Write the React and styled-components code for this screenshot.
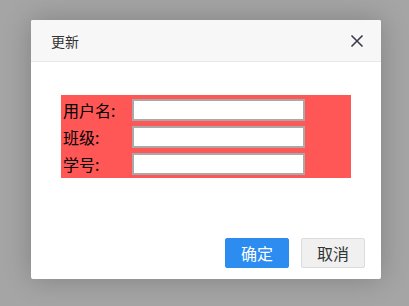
import { Fragment } from 'react';
import styled, { createGlobalStyle } from 'styled-components';

const Global = createGlobalStyle`
  body {
    margin: 0;
    font-family: "Noto Sans CJK SC", "Noto Sans", sans-serif;
  }
`;

const Backdrop = styled.div`
  width: 409px;
  height: 306px;
  box-sizing: border-box;
  padding: 20px 0 0 31px;
  background: #a5a5a5;
  overflow: hidden;
`;

const Dialog = styled.div`
  width: 350px;
  height: 259px;
  display: flex;
  flex-direction: column;
  background: #fff;
  border-radius: 2px;
  box-shadow: 0 0 28px rgba(0, 0, 0, 0.22);
  overflow: hidden;
`;

const Header = styled.div`
  height: 42px;
  box-sizing: border-box;
  display: flex;
  align-items: center;
  justify-content: space-between;
  padding: 0 17px 0 20px;
  background: #f7f7f7;
  border-bottom: 1px solid #e9e9e9;
`;

const Title = styled.span`
  font-size: 14px;
  color: #333;
`;

const Close = styled.button`
  width: 14px;
  height: 14px;
  padding: 0;
  border: 0;
  background: none;
  display: flex;
  cursor: pointer;
`;

const Body = styled.div`
  flex: 1;
  padding: 33px 30px 0;
`;

const Form = styled.div`
  width: 290px;
  height: 83px;
  box-sizing: border-box;
  padding: 4px 2px 0;
  background: #ff5656;
  display: grid;
  grid-template-columns: 69px 173px;
  grid-auto-rows: 22px;
  row-gap: 5px;
  align-items: center;
`;

const Label = styled.label`
  font-size: 16px;
  color: #000;
  line-height: 22px;
`;

const Input = styled.input`
  width: 173px;
  height: 22px;
  box-sizing: border-box;
  border: 2px solid #a9a9a9;
  background: #fff;
  outline: none;
`;

const Footer = styled.div`
  display: flex;
  justify-content: flex-end;
  gap: 12px;
  padding: 0 16px 11px;
`;

const Button = styled.button`
  width: 64px;
  height: 30px;
  border-radius: 2px;
  font-family: inherit;
  font-size: 16px;
  cursor: pointer;
  border: 1px solid ${p => (p.$primary ? '#2d8cf0' : '#dcdcdc')};
  background: ${p => (p.$primary ? '#2d8cf0' : '#f0f0f0')};
  color: ${p => (p.$primary ? '#fff' : '#333')};
`;

const fields = ['用户名:', '班级:', '学号:'];

export default function App() {
  return (
    <Backdrop>
      <Global />
      <Dialog>
        <Header>
          <Title>更新</Title>
          <Close aria-label="close">
            <svg width="14" height="14" viewBox="0 0 14 14">
              <path d="M1.5 1.5L12.5 12.5M12.5 1.5L1.5 12.5" stroke="#3a3a48" strokeWidth="1.6" />
            </svg>
          </Close>
        </Header>
        <Body>
          <Form>
            {fields.map(f => (
              <Fragment key={f}>
                <Label>{f}</Label>
                <Input />
              </Fragment>
            ))}
          </Form>
        </Body>
        <Footer>
          <Button $primary>确定</Button>
          <Button>取消</Button>
        </Footer>
      </Dialog>
    </Backdrop>
  );
}
